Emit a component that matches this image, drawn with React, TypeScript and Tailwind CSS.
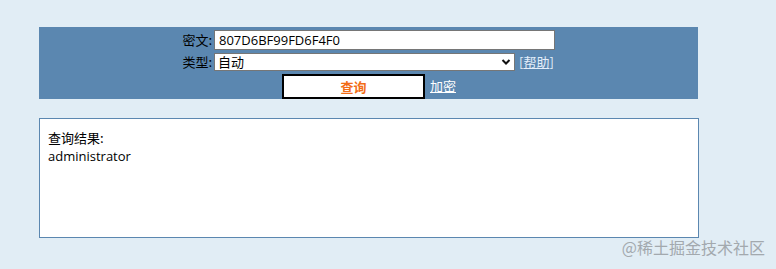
export default function App() {
  return (
    <div className="relative h-[269px] w-[776px] bg-[#e1edf5] pt-[27px] font-['Noto_Sans_CJK_SC',sans-serif] text-[13px] text-black">
      <div className="mx-[39px] flex h-[72px] w-[659px] flex-col items-center bg-[#5b87b0] pt-[3px]">
        <div className="flex w-full items-center pl-[139px]">
          <span className="w-[34px] text-right leading-[20px]">密文:</span>
          <input
            readOnly
            value="807D6BF99FD6F4F0"
            className="ml-[2px] h-[20px] w-[341px] border border-[#767676] bg-white px-[4px] font-['Open_Sans',sans-serif] text-[13px] leading-[18px] outline-none"
          />
        </div>
        <div className="mt-[2px] flex w-full items-center pl-[139px]">
          <span className="w-[34px] text-right leading-[18px]">类型:</span>
          <div className="ml-[2px] flex h-[18px] w-[301px] items-center justify-between border border-[#767676] bg-white px-[3px]">
            <span className="leading-[16px]">自动</span>
            <svg width="10" height="8" viewBox="0 0 10 8">
              <path d="M1.5 2 L5 5.5 L8.5 2" fill="none" stroke="#111" strokeWidth="2" />
            </svg>
          </div>
          <span className="ml-[4px] text-[#e3eefa]">
            [<span className="underline">帮助</span>]
          </span>
        </div>
        <div className="mt-[2px] flex w-full items-center pl-[243px]">
          <button className="h-[25px] w-[143px] border-2 border-black bg-white text-[13px] font-bold leading-[21px] text-[#f26d16]">
            查询
          </button>
          <span className="ml-[5px] text-white underline">加密</span>
        </div>
      </div>
      <div className="mx-[39px] mt-[19px] h-[120px] w-[660px] border border-[#5b87b0] bg-white px-[8px] pt-[10px] leading-[18px]">
        <div>查询结果:</div>
        <div className="font-['Open_Sans',sans-serif]">administrator</div>
      </div>
      <div className="absolute right-[11px] top-[236px] text-[16px] leading-[22px] text-[#a3a9ae]">@稀土掘金技术社区</div>
    </div>
  )
}
